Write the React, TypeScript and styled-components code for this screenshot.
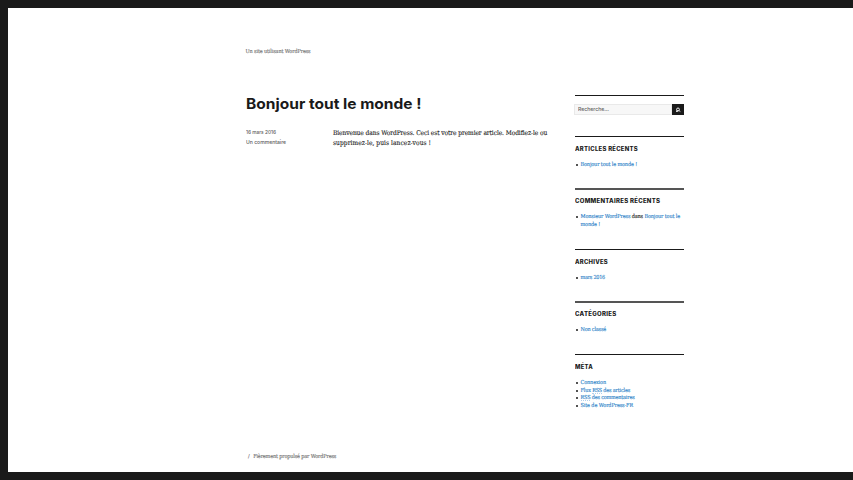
import React, { useLayoutEffect, useRef, useState } from "react";
import styled, { createGlobalStyle } from "styled-components";

const serif = '"DejaVu Serif Condensed", "DejaVu Serif", serif';
const sans = 'Inter, "Liberation Sans", sans-serif';

const GlobalStyle = createGlobalStyle`
  * { box-sizing: border-box; }
  html, body { margin: 0; padding: 0; background: #fff; overflow: hidden; }
  a { color: inherit; text-decoration: none; }
`;

const Frame = styled.div`
  width: 853px;
  height: 480px;
  border: solid #1a1a1a;
  border-width: 8px 0 8px 8px;
  background: #fff;
  color: #1a1a1a;
`;

const Site = styled.div`
  display: flex;
  flex-direction: column;
  width: 439px;
  height: 464px;
  margin-left: 238px;
`;

const Header = styled.header`
  height: 87px;
  padding-top: 39px;
  font: 5.5px/8px ${serif};
  color: #707070;
  -webkit-text-stroke: 0.12px;
  margin-left: -0.5px;
`;

const Columns = styled.div`
  display: grid;
  grid-template-columns: 302px 109px;
  column-gap: 27px;
  height: 357px;
`;

const Title = styled.h1`
  margin: 0 0 0 -0.4px;
  font: 700 14.6px/18px ${sans};
  height: 32px;
`;

const ArticleBody = styled.div`
  display: grid;
  grid-template-columns: 87px 215px;
`;

const Meta = styled.div`
  margin-left: -0.4px;
  font: 500 5.2px/10px ${sans};
  color: #606060;
`;

const Copy = styled.p`
  margin: 0;
  padding-top: 1px;
  font: 6.6px/10px ${serif};
  color: #1a1a1a;
  -webkit-text-stroke: 0.1px;
`;

const Sidebar = styled.aside`
  display: flex;
  flex-direction: column;
`;

const Widget = styled.section<{ $height: number; $soft?: boolean }>`
  height: ${(p) => p.$height}px;
  flex: none;
  border-top: ${(p) => (p.$soft ? "2px solid #555" : "1px solid #1a1a1a")};
`;

const SearchForm = styled.form`
  display: flex;
  height: 11px;
  width: 110px;
  margin: 8px 0 0 -1px;
`;

const SearchField = styled.div`
  flex: 1;
  padding-left: 3px;
  border: 1px solid #e9e9e9;
  background: #f7f7f7;
  font: 500 5.2px/9px ${sans};
  color: #606060;
`;

const SearchButton = styled.button`
  display: flex;
  align-items: center;
  justify-content: center;
  width: 12px;
  padding: 1px 0 0;
  border: 0;
  background: #1a1a1a;
`;

const WidgetTitle = styled.h2<{ $soft?: boolean }>`
  margin: ${(p) => (p.$soft ? 7 : 8)}px 0 8px -0.4px;
  font: 800 5.5px/8px ${sans};
  letter-spacing: 0.25px;
`;

const List = styled.ul`
  margin: 0;
  padding: 0 0 0 5.5px;
  list-style: none;
`;

const Item = styled.li`
  position: relative;
  font: 5.5px/7.7px ${serif};
  color: #1a1a1a;
  -webkit-text-stroke: 0.12px;
  &::before {
    content: "";
    position: absolute;
    left: -5px;
    top: 3px;
    width: 2px;
    height: 2px;
    border-radius: 50%;
    background: #1a1a1a;
  }
`;

const Link = styled.a`
  color: #2a7fc8;
`;

const Abbr = styled.span`
  border-bottom: 1px dotted #b4d0ea;
`;

const Footer = styled.footer`
  display: flex;
  gap: 3.5px;
  padding-left: 2px;
  font: 5.5px/8px ${serif};
  color: #707070;
  -webkit-text-stroke: 0.12px;
`;

const LineBox = styled.span`
  display: block;
  white-space: nowrap;
`;

const Measured = styled.span`
  display: inline-block;
  transform-origin: 0 50%;
`;

/* Fits a single line of text to the given measure, by tracking or by widening its letters. */
function Line({ width, wide, children }: { width: number; wide?: boolean; children: React.ReactNode }) {
  const ref = useRef<HTMLSpanElement>(null);
  const [natural, setNatural] = useState({ width: 0, count: 1 });
  useLayoutEffect(() => {
    const el = ref.current;
    if (!el) return;
    setNatural({ width: el.getBoundingClientRect().width, count: (el.textContent ?? "").length });
  }, []);
  const fit =
    natural.width === 0
      ? undefined
      : wide
        ? { transform: `scaleX(${width / natural.width})` }
        : { letterSpacing: (width - natural.width) / natural.count };
  return (
    <LineBox>
      <Measured ref={ref} style={fit}>{children}</Measured>
    </LineBox>
  );
}

function SearchIcon() {
  return (
    <svg width="6" height="6" viewBox="0 0 6 6" fill="none" stroke="#fff">
      <circle cx="3" cy="2.4" r="1.4" strokeWidth="0.9" />
      <path d="M4 3.6 5.4 4.6M2 3.6 1 4.4H3.2" strokeWidth="0.8" />
    </svg>
  );
}

export default function App() {
  return (
    <>
      <GlobalStyle />
      <Frame>
        <Site>
          <Header><Line width={65}>Un site utilisant WordPress</Line></Header>
          <Columns>
            <main>
              <Title><Line wide width={175.5}>Bonjour tout le monde !</Line></Title>
              <ArticleBody>
                <Meta>
                  <Line wide width={30}>16 mars 2016</Line>
                  <Line wide width={40}>Un commentaire</Line>
                </Meta>
                <Copy>
                  <Line width={214}>Bienvenue dans WordPress. Ceci est votre premier article. Modifiez-le ou</Line>
                  <Line width={98}>supprimez-le, puis lancez-vous !</Line>
                </Copy>
              </ArticleBody>
            </main>
            <Sidebar>
              <Widget $height={41}>
                <SearchForm>
                  <SearchField><Line wide width={31}>Recherche…</Line></SearchField>
                  <SearchButton type="button" aria-label="Recherche"><SearchIcon /></SearchButton>
                </SearchForm>
              </Widget>
              <Widget $height={52}>
                <WidgetTitle><Line wide width={63}>ARTICLES RÉCENTS</Line></WidgetTitle>
                <List>
                  <Item><Line width={56.5}><Link href="#">Bonjour tout le monde !</Link></Line></Item>
                </List>
              </Widget>
              <Widget $height={61} $soft>
                <WidgetTitle $soft><Line wide width={85.3}>COMMENTAIRES RÉCENTS</Line></WidgetTitle>
                <List>
                  <Item>
                    <Line width={99.5}><Link href="#">Monsieur WordPress</Link> dans <Link href="#">Bonjour tout le</Link></Line>
                    <Line width={19.5}><Link href="#">monde !</Link></Line>
                  </Item>
                </List>
              </Widget>
              <Widget $height={52}>
                <WidgetTitle><Line wide width={33}>ARCHIVES</Line></WidgetTitle>
                <List>
                  <Item><Line width={24.5}><Link href="#">mars 2016</Link></Line></Item>
                </List>
              </Widget>
              <Widget $height={53} $soft>
                <WidgetTitle $soft><Line wide width={41.5}>CATÉGORIES</Line></WidgetTitle>
                <List>
                  <Item><Line width={25.5}><Link href="#">Non classé</Link></Line></Item>
                </List>
              </Widget>
              <Widget $height={60}>
                <WidgetTitle><Line wide width={18}>MÉTA</Line></WidgetTitle>
                <List>
                  <Item><Line width={25.5}><Link href="#">Connexion</Link></Line></Item>
                  <Item><Line width={49.5}><Link href="#">Flux <Abbr>RSS</Abbr> des articles</Link></Line></Item>
                  <Item><Line width={54}><Link href="#"><Abbr>RSS</Abbr> des commentaires</Link></Line></Item>
                  <Item><Line width={52.5}><Link href="#">Site de WordPress-FR</Link></Line></Item>
                </List>
              </Widget>
            </Sidebar>
          </Columns>
          <Footer>
            <span>/</span>
            <Line width={83}>Fièrement propulsé par WordPress</Line>
          </Footer>
        </Site>
      </Frame>
    </>
  );
}
